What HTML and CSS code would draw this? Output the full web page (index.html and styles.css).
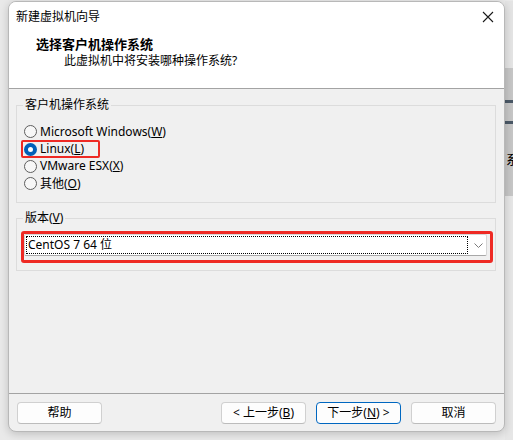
FILE: index.html
```html
<!DOCTYPE html>
<html lang="zh-CN">
<head>
<meta charset="utf-8">
<title>新建虚拟机向导</title>
<link rel="stylesheet" href="styles.css">
</head>
<body>
<div class="desk">
  <div class="dialog">
    <div class="titlebar">
      <span class="title">新建虚拟机向导</span>
      <svg class="close" width="12" height="12" viewBox="0 0 12 12"><path d="M1 1L11 11M11 1L1 11" stroke="#1a1a1a" stroke-width="1.1" fill="none"/></svg>
    </div>
    <div class="header">
      <div class="h-title">选择客户机操作系统</div>
      <div class="h-sub">此虚拟机中将安装哪种操作系统?</div>
    </div>
    <div class="content">
      <fieldset class="group g1">
        <legend>客户机操作系统</legend>
        <div class="radios">
          <div class="radio"><span class="dot"></span><span>Microsoft Windows(<u>W</u>)</span></div>
          <div class="radio"><span class="dot on"></span><span>Linux(<u>L</u>)</span></div>
          <div class="radio"><span class="dot"></span><span>VMware ESX(<u>X</u>)</span></div>
          <div class="radio"><span class="dot"></span><span>其他(<u>O</u>)</span></div>
        </div>
        <div class="mark mark-linux"></div>
      </fieldset>
      <fieldset class="group g2">
        <legend>版本(<u>V</u>)</legend>
        <div class="combo">
          <span class="focus">CentOS 7 64 位</span>
          <svg class="chev" width="9" height="5" viewBox="0 0 9 5"><path d="M0.5 0.5L4.5 4.5L8.5 0.5" stroke="#7a7a7a" stroke-width="1" fill="none"/></svg>
        </div>
        <div class="mark mark-combo"></div>
      </fieldset>
    </div>
    <div class="footer">
      <button class="btn">帮助</button>
      <div class="spacer"></div>
      <button class="btn">&lt; 上一步(<u>B</u>)</button>
      <button class="btn primary">下一步(<u>N</u>) &gt;</button>
      <button class="btn">取消</button>
    </div>
  </div>
  <div class="behind">
    <div class="b-top"></div>
    <div class="b-mid">
      <div class="b-bar"></div>
      <div class="b-bar b2"></div>
      <span class="b-char">系</span>
    </div>
    <div class="b-low"></div>
  </div>
</div>
</body>
</html>
```

FILE: styles.css
```css
* { box-sizing: border-box; }
html, body { margin: 0; padding: 0; }
body {
  width: 513px;
  height: 440px;
  overflow: hidden;
  background: #e9e9e9;
  font-family: "Noto Sans", "Noto Sans CJK SC", sans-serif;
  font-size: 12px;
  color: #000;
}
u { text-decoration: underline; text-underline-offset: 1px; }
.desk {
  display: flex;
  padding: 1px 0 0 8px;
  height: 440px;
}
.dialog {
  width: 497px;
  height: 431px;
  background: #f0f0f0;
  border: 1px solid #b8b8b8;
  border-radius: 8px;
  box-shadow: 0 2px 8px rgba(0,0,0,0.18);
  overflow: hidden;
  display: flex;
  flex-direction: column;
  position: relative;
  z-index: 1;
}
.titlebar {
  height: 30px;
  background: #fff;
  display: flex;
  align-items: center;
  justify-content: space-between;
  padding: 0 10px 0 7px;
}
.title { font-size: 12px; line-height: 16px; }
.close { display: block; }
.header {
  height: 57px;
  background: #fff;
  border-bottom: 1px solid #a3a3a3;
  padding: 3px 0 0 27px;
}
.h-title { font-weight: bold; font-size: 13px; line-height: 18px; }
.h-sub { padding-left: 28px; line-height: 18px; margin-top: -1px; }
.content {
  flex: 1;
  padding: 8px 8px 0 7px;
}
.group {
  margin: 0;
  padding: 0;
  border: 1px solid #dcdcdc;
  position: relative;
}
.group legend {
  margin-left: 6px;
  padding: 0 2px;
  line-height: 16px;
  font-size: 12px;
}
.g1 { height: 106px; }
.g2 { height: 61px; margin-top: 7px; }
.radios { padding: 10px 0 0 7px; }
.radio {
  display: flex;
  align-items: center;
  height: 17.4px;
  gap: 3px;
  line-height: 16px;
}
.dot {
  width: 13px;
  height: 13px;
  border-radius: 50%;
  border: 1px solid #5e5e5e;
  background: #f7f7f7;
  flex: none;
}
.dot.on {
  border: 4px solid #005fb8;
  background: #fff;
}
.mark {
  position: absolute;
  border: 2px solid #ee2a24;
  border-radius: 2px;
}
.mark-linux { left: 4px; top: 27px; width: 79px; height: 18px; }
.mark-combo { left: 4px; top: 5px; width: 472px; height: 32px; border-width: 3px; border-radius: 3px; }
.combo {
  margin: 8px 8px 0 7px;
  height: 22px;
  background: #fff;
  border: 1px solid #d6d6d6;
  border-bottom-color: #a8a8a8;
  border-radius: 2px;
  display: flex;
  align-items: center;
  padding: 0 3px 0 2px;
}
.focus {
  flex: 1;
  height: 16px;
  line-height: 15px;
  outline: 1px dotted #000;
  outline-offset: 0;
  padding-left: 1px;
  margin-right: 7px;
}
.chev { display: block; }
.footer {
  height: 38px;
  border-top: 1px solid #a3a3a3;
  display: flex;
  align-items: flex-start;
  padding: 8px 8px 0 8px;
  gap: 10px;
  margin-bottom: 0;
}
.spacer { flex: 1; }
.btn {
  width: 85px;
  height: 22px;
  background: #fdfdfd;
  border: 1px solid #d0d0d0;
  border-bottom-color: #bcbcbc;
  border-radius: 4px;
  font-family: inherit;
  font-size: 12px;
  line-height: 16px;
  padding: 0;
  color: #000;
}
.btn.primary { border-color: #0067c0; }
.behind {
  flex: 1;
  display: flex;
  flex-direction: column;
}
.b-top { height: 67px; background: #e4e4e4; }
.b-mid {
  height: 128px;
  background: #c6c6c6;
  position: relative;
  overflow: hidden;
}
.b-bar { height: 3px; background: #4a5866; margin-top: 32px; }
.b-bar.b2 { margin-top: 18px; }
.b-char {
  position: absolute;
  left: 1px;
  top: 84px;
  font-size: 13px;
  line-height: 14px;
  font-family: "Noto Sans CJK SC", sans-serif;
}
.b-low { flex: 1; background: #e6e6e6; }
```
